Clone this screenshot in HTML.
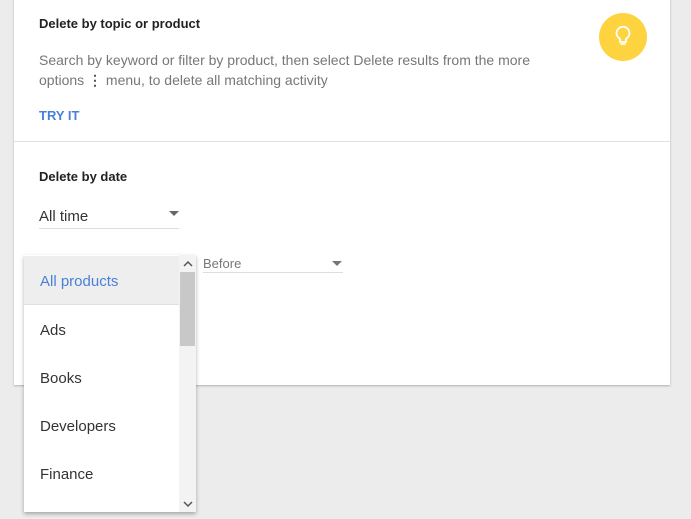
<!DOCTYPE html>
<html><head><style>
body{margin:0;width:691px;height:519px;background:#ececec;font-family:"Liberation Sans",Arial,sans-serif;position:relative;overflow:hidden}
.card{position:absolute;left:14px;top:-2px;width:656px;height:387px;background:#fff;box-shadow:0 1px 2px rgba(0,0,0,.25)}
.abs{position:absolute}
h3{margin:0;font-size:13px;font-weight:bold;color:#222}
.menu{position:absolute;left:24px;top:255px;width:172px;height:257px;background:#fff;box-shadow:0 2px 4px rgba(0,0,0,.3)}
.it{position:absolute;left:16px;font-size:15px;color:#333}
</style></head><body>
<div class="card">
 <h3 class="abs" style="left:25px;top:18px">Delete by topic or product</h3>
 <div class="abs" style="left:25px;top:52px;width:520px;font-size:14px;line-height:20px;color:#777">Search by keyword or filter by product, then select Delete results from the more options <span style="display:inline-block;width:14px;text-align:center;color:#555;font-weight:bold">⋮</span> menu, to delete all matching activity</div>
 <div class="abs" style="left:25px;top:110px;font-size:13px;font-weight:bold;color:#4a80d8">TRY IT</div>
 <div class="abs" style="left:585px;top:15px;width:48px;height:48px;border-radius:50%;background:#fdd33f">
  <svg width="48" height="48" viewBox="0 0 48 48"><path d="M21 29v-3c-2-1.5-3.5-3.3-3.5-5.7a6.5 6.5 0 0113 0c0 2.4-1.5 4.2-3.5 5.7v3z M21.5 31h5" fill="none" stroke="#fff" stroke-width="1.8"/></svg>
 </div>
 <div class="abs" style="left:0;top:143px;width:656px;height:1px;background:#e2e2e2"></div>
 <h3 class="abs" style="left:25px;top:171px">Delete by date</h3>
 <div class="abs" style="left:25px;top:210px;font-size:15px;color:#333">All time</div>
 <div class="abs" style="left:155px;top:213px;border-left:5px solid transparent;border-right:5px solid transparent;border-top:5px solid #666"></div>
 <div class="abs" style="left:25px;top:230px;width:140px;height:1px;background:#ddd"></div>
 <div class="abs" style="left:189px;top:258px;font-size:13px;color:#777">Before</div>
 <div class="abs" style="left:318px;top:263px;border-left:5px solid transparent;border-right:5px solid transparent;border-top:5px solid #777"></div>
 <div class="abs" style="left:189px;top:274px;width:140px;height:1px;background:#ddd"></div>
</div>
<div class="menu">
 <div class="abs" style="left:0;top:1px;width:155px;height:48px;background:#eeeeee;border-bottom:1px solid #e0e0e0"></div>
 <div class="it" style="top:18px;color:#4a80d8">All products</div>
 <div class="it" style="top:67px">Ads</div>
 <div class="it" style="top:115px">Books</div>
 <div class="it" style="top:163px">Developers</div>
 <div class="it" style="top:211px">Finance</div>
 <div class="abs" style="left:155px;top:0;width:17px;height:257px;background:#f3f3f3"></div>
 <div class="abs" style="left:156px;top:17px;width:15px;height:74px;background:#c8c8c8"></div>
 <svg class="abs" style="left:159px;top:5px" width="10" height="8"><path d="M1 6l4-4 4 4" fill="none" stroke="#555" stroke-width="1.5"/></svg>
 <svg class="abs" style="left:159px;top:245px" width="10" height="8"><path d="M1 2l4 4 4-4" fill="none" stroke="#555" stroke-width="1.5"/></svg>
</div>
</body></html>
